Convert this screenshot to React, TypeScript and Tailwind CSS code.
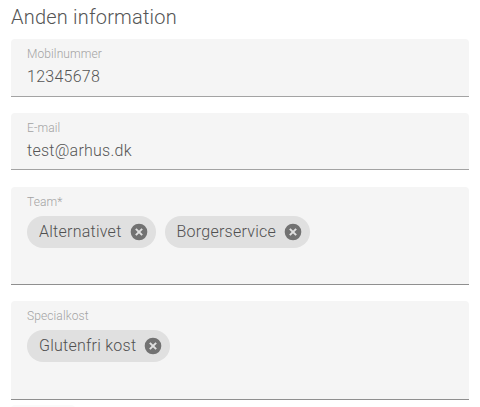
function RemoveIcon() {
  return (
    <svg viewBox="0 0 24 24" className="ml-[7px] h-5 w-5 shrink-0">
      <circle cx="12" cy="12" r="10" className="fill-[#727272]" />
      <path d="M8.2 8.2l7.6 7.6M15.8 8.2l-7.6 7.6" className="fill-none stroke-[#e0e0e0] stroke-[2.4]" />
    </svg>
  );
}

function Chip({ label }: { label: string }) {
  return (
    <div className="flex h-8 items-center rounded-2xl bg-[#e0e0e0] pr-[7px] pl-3 text-base font-light tracking-[0.25px] text-[#505050]">
      <span>{label}</span>
      <RemoveIcon />
    </div>
  );
}

function TextField({ label, value }: { label: string; value: string }) {
  return (
    <div className="h-[57.6px] rounded-t border-b border-b-[#a3a3a3] bg-[#f5f5f5] px-4 pt-[7px]">
      <div className="text-xs leading-[16px] font-light tracking-[0.1px] text-[#a3a3a3]">{label}</div>
      <div className="mt-1 text-base leading-[22px] font-light tracking-[0.25px] text-[#555]">{value}</div>
    </div>
  );
}

function ChipField({ label, chips }: { label: string; chips: string[] }) {
  return (
    <div className="h-[98.4px] rounded-t border-b border-b-[#8f8f8f] bg-[#f5f5f5] px-4 pt-[7px]">
      <div className="text-xs leading-[16px] font-light tracking-[0.1px] text-[#a3a3a3]">{label}</div>
      <div className="mt-[6px] flex gap-[9px]">
        {chips.map((chip) => (
          <Chip key={chip} label={chip} />
        ))}
      </div>
    </div>
  );
}

export default function App() {
  return (
    <div className="h-[407px] w-[480px] overflow-hidden bg-white px-[11px] font-['Roboto',sans-serif]">
      <h2 className="pt-[5px] text-xl leading-6 font-light tracking-[0.2px] text-[#555]">Anden information</h2>
      <div className="mt-[10px] flex flex-col gap-[16.2px]">
        <TextField label="Mobilnummer" value="12345678" />
        <TextField label="E-mail" value="test@arhus.dk" />
        <ChipField label="Team*" chips={['Alternativet', 'Borgerservice']} />
        <ChipField label="Specialkost" chips={['Glutenfri kost']} />
      </div>
      <div className="mt-[5px] h-4 w-[64px] rounded-t bg-[#fafafa]" />
    </div>
  );
}
